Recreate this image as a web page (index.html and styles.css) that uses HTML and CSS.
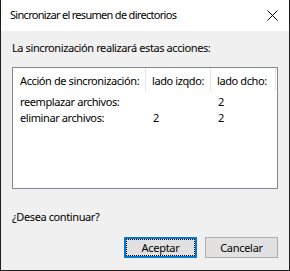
FILE: index.html
```html
<!DOCTYPE html>
<html lang="es">
<head>
<meta charset="utf-8">
<link rel="stylesheet" href="styles.css">
</head>
<body>
<div class="window">
  <div class="titlebar">
    <span class="title">Sincronizar el resumen de directorios</span>
    <svg class="close" width="11" height="11" viewBox="0 0 11 11"><path d="M0.5 0.5 L10.5 10.5 M10.5 0.5 L0.5 10.5" stroke="#000" stroke-width="1" fill="none"/></svg>
  </div>
  <div class="content">
    <p class="intro">La sincronización realizará estas acciones:</p>
    <div class="list">
      <div class="head">
        <div class="hcell c1">Acción de sincronización:</div>
        <div class="hcell c2">lado izqdo:</div>
        <div class="hcell c3">lado dcho:</div>
      </div>
      <div class="rows">
        <div class="row"><span class="c1">reemplazar archivos:</span><span class="c2"></span><span class="c3">2</span></div>
        <div class="row"><span class="c1">eliminar archivos:</span><span class="c2">2</span><span class="c3">2</span></div>
      </div>
    </div>
    <p class="question">¿Desea continuar?</p>
    <div class="buttons">
      <button class="btn default">Aceptar</button>
      <button class="btn">Cancelar</button>
    </div>
  </div>
</div>
</body>
</html>
```
FILE: styles.css
```css
html, body {
  margin: 0;
  padding: 0;
  background: #f0f0f0;
}
body {
  font-family: "Noto Sans", "DejaVu Sans", sans-serif;
  font-size: 11px;
  letter-spacing: -0.4px;
  color: #000;
}
.window {
  width: 290px;
  height: 271px;
  box-sizing: border-box;
  border: 1px solid #1e1e1e;
  border-top: none;
  background: #f0f0f0;
  display: flex;
  flex-direction: column;
}
.titlebar {
  height: 31px;
  background: #fff;
  display: flex;
  align-items: center;
  padding: 0 10px 0 9px;
  justify-content: space-between;
}
.title {
  font-size: 11px;
  letter-spacing: -0.7px;
  line-height: 16px;
  margin-top: -1px;
}
.close {
  display: block;
  margin-right: 1px;
}
.content {
  padding: 0 11px;
  display: flex;
  flex-direction: column;
}
.intro {
  margin: 9px 0 0 0;
  line-height: 16px;
}
.list {
  margin-top: 11px;
  height: 122px;
  box-sizing: border-box;
  border: 1px solid #828790;
  background: #fff;
}
.head {
  display: grid;
  grid-template-columns: 133px 65px 65px;
  height: 23px;
}
.hcell {
  border-right: 1px solid #e5e5e5;
  padding-left: 7px;
  line-height: 16px;
  padding-top: 5px;
  white-space: nowrap;
  overflow: hidden;
}
.hcell.c2, .hcell.c3 {
  padding-left: 6px;
}
.rows {
  padding-top: 3px;
}
.row {
  display: grid;
  grid-template-columns: 133px 65px 65px;
  line-height: 16px;
}
.row span {
  padding-left: 7px;
  white-space: nowrap;
}
.question {
  margin: 20px 0 0 0;
  line-height: 16px;
}
.buttons {
  margin-top: 12px;
  display: flex;
  justify-content: flex-end;
  gap: 8px;
}
.btn {
  width: 73px;
  height: 21px;
  box-sizing: border-box;
  border: 1px solid #adadad;
  background: #e1e1e1;
  font-family: inherit;
  font-size: 11px;
  letter-spacing: -0.3px;
  color: #000;
  padding: 0;
  margin: 0;
  border-radius: 0;
}
.btn.default {
  border: 2px solid #0078d7;
  outline: 1px dotted #000;
  outline-offset: -3px;
}
```
